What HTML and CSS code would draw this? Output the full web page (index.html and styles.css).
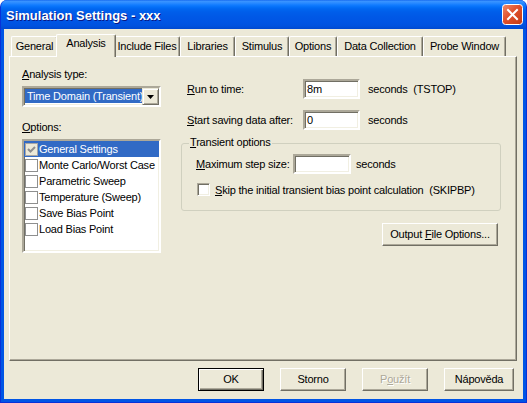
FILE: index.html
```html
<!DOCTYPE html>
<html>
<head>
<meta charset="utf-8">
<link rel="stylesheet" href="styles.css">
</head>
<body>
<div class="window">
  <div class="titlebar">
    <span class="title">Simulation Settings - xxx</span>
    <div class="close">
      <svg width="21" height="21" viewBox="0 0 21 21">
        <defs>
          <linearGradient id="cg" x1="0" y1="0" x2="1" y2="1">
            <stop offset="0" stop-color="#F08C6C"/>
            <stop offset="0.45" stop-color="#E0502C"/>
            <stop offset="1" stop-color="#C23A14"/>
          </linearGradient>
        </defs>
        <rect x="0.5" y="0.5" width="20" height="20" rx="3" fill="url(#cg)" stroke="#fff"/>
        <path d="M6 6 L15 15 M15 6 L6 15" stroke="#fff" stroke-width="2" stroke-linecap="square"/>
      </svg>
    </div>
  </div>
  <div class="client">
    <div class="tabs">
      <div class="tab t-general">General</div>
      <div class="tab active t-analysis">Analysis</div>
      <div class="tab t-include">Include Files</div>
      <div class="tab t-libraries">Libraries</div>
      <div class="tab t-stimulus">Stimulus</div>
      <div class="tab t-options">Options</div>
      <div class="tab t-data">Data Collection</div>
      <div class="tab t-probe">Probe Window</div>
    </div>
    <div class="panel">
      <div class="left">
        <div class="label"><u>A</u>nalysis type:</div>
        <div class="combo sunken">
          <span class="combo-text">Time Domain (Transient)</span>
          <span class="combo-btn">
            <svg width="7" height="4" viewBox="0 0 7 4"><path d="M0 0H7L3.5 4Z" fill="#000"/></svg>
          </span>
        </div>
        <div class="label label-options"><u>O</u>ptions:</div>
        <div class="listbox sunken">
          <div class="item selected"><span class="lcb checked"><svg width="11" height="11" viewBox="0 0 11 11"><path d="M2 5 L4.5 7.5 L9 3" stroke="#8E8E8E" stroke-width="2" fill="none"/></svg></span>General Settings</div>
          <div class="item"><span class="lcb"></span>Monte Carlo/Worst Case</div>
          <div class="item"><span class="lcb"></span>Parametric Sweep</div>
          <div class="item"><span class="lcb"></span>Temperature (Sweep)</div>
          <div class="item"><span class="lcb"></span>Save Bias Point</div>
          <div class="item"><span class="lcb"></span>Load Bias Point</div>
        </div>
      </div>
      <div class="right">
        <div class="row row-first">
          <span class="rlabel"><u>R</u>un to time:</span>
          <span class="textbox sunken">8m</span>
          <span class="suffix">seconds&nbsp; (TSTOP)</span>
        </div>
        <div class="row row-second">
          <span class="rlabel"><u>S</u>tart saving data after:</span>
          <span class="textbox sunken">0</span>
          <span class="suffix">seconds</span>
        </div>
        <div class="group">
          <div class="group-title"><u>T</u>ransient options</div>
          <div class="grow">
            <span class="glabel"><u>M</u>aximum step size:</span>
            <span class="textbox sunken gtext"></span>
            <span class="gsuffix">seconds</span>
          </div>
          <div class="crow">
            <span class="checkbox"></span>
            <span class="ctext"><u>S</u>kip the initial transient bias point calculation&nbsp; (SKIPBP)</span>
          </div>
        </div>
        <div class="outrow">
          <div class="btn btn-output">Output <u>F</u>ile Options...</div>
        </div>
      </div>
    </div>
    <div class="buttons">
      <div class="btn default">OK</div>
      <div class="btn">Storno</div>
      <div class="btn disabled">P<u>o</u>užít</div>
      <div class="btn wide">Nápověda</div>
    </div>
  </div>
</div>
</body>
</html>
```
FILE: styles.css
```css
* { box-sizing: border-box; }
body {
  margin: 0;
  font-family: "Liberation Sans", Arial, sans-serif;
  font-size: 11px;
  letter-spacing: -0.2px;
  color: #000;
  background: #fff;
}
u { text-decoration: underline; text-underline-offset: 1px; }

.window {
  width: 527px;
  height: 403px;
  display: flex;
  flex-direction: column;
  background: #0055E5;
  border-radius: 7px 7px 0 0;
  overflow: hidden;
  border: 1px solid #0831D9;
  border-top: none;
}

.titlebar {
  height: 29px;
  flex: 0 0 29px;
  display: flex;
  align-items: center;
  padding: 0 4px 0 6px;
  background: linear-gradient(to bottom,
    #0A5EEA 0px, #3D95FF 1px, #2A8BFF 3px, #117CFF 5px, #0470F8 7px,
    #0066F0 9px, #005EEA 12px, #0058E6 17px, #0055E4 22px, #0052DE 26px, #0049D0 29px);
  margin: 0 -1px;
}
.title {
  color: #fff;
  font-weight: bold;
  font-size: 13px;
  letter-spacing: 0;
  text-shadow: 1px 1px 0 #0A1883;
  padding-top: 1px;
}
.close {
  margin-left: auto;
  width: 21px;
  height: 21px;
  display: flex;
}

.client {
  flex: 1;
  margin: 0 3px 3px 3px;
  background: #ECE9D8;
  padding: 5px 6px 7px 5px;
  display: flex;
  flex-direction: column;
}

/* tabs */
.tabs {
  height: 22px;
  flex: 0 0 22px;
  display: flex;
  align-items: flex-end;
  padding-left: 2px;
}
.tab {
  height: 20px;
  line-height: 18px;
  text-align: center;
  background: #ECE9D8;
  border-top: 1px solid #fff;
  border-left: 1px solid #fff;
  border-right: 1px solid #716F64;
  box-shadow: inset -1px 0 #ACA899;
  border-radius: 2px 2px 0 0;
  white-space: nowrap;
}
.tab.active {
  height: 23px;
  line-height: 17px;
  margin: 0 -2px -1px -2px;
  position: relative;
  z-index: 1;
}
.t-general { width: 47px; }
.t-analysis { width: 60px; }
.t-include { width: 66px; }
.t-libraries { width: 55px; }
.t-stimulus { width: 54px; }
.t-options { width: 48px; }
.t-data { width: 86px; }
.t-probe { width: 83px; }

/* panel */
.panel {
  flex: 0 0 305px;
  border: 1px solid;
  border-color: #fff #716F64 #716F64 #fff;
  box-shadow: inset -1px -1px #ACA899;
  padding: 11px 15px 0 12px;
  display: grid;
  grid-template-columns: 139px 320px;
  column-gap: 20px;
  align-items: start;
}

.sunken {
  border: 2px solid;
  border-color: #ACA899 #fff #fff #ACA899;
  box-shadow: inset 1px 1px #716F64, inset -1px -1px #F1EFE2;
  background: #fff;
}

.left { display: flex; flex-direction: column; }
.label { line-height: 13px; height: 13px; }
.combo {
  margin-top: 5px;
  height: 21px;
  display: flex;
  padding: 1px;
}
.combo-text {
  flex: 1;
  background: #316AC5;
  color: #fff;
  line-height: 15px;
  padding-left: 2px;
  margin: 0 0 1px 0;
  white-space: nowrap;
  overflow: hidden;
}
.combo-btn {
  width: 17px;
  height: 17px;
  margin: -1px -1px 0 0;
  background: #ECE9D8;
  border: 1px solid;
  border-color: #ECE9D8 #716F64 #716F64 #ECE9D8;
  box-shadow: inset 1px 1px #fff, inset -1px -1px #ACA899;
  display: flex;
  align-items: center;
  justify-content: center;
}
.label-options { margin-top: 14px; }
.listbox {
  margin-top: 5px;
  height: 114px;
  display: flex;
  flex-direction: column;
}
.item {
  height: 16px;
  line-height: 16px;
  display: flex;
  align-items: center;
  padding-left: 1px;
  white-space: nowrap;
}
.item.selected { background: #316AC5; color: #fff; }
.lcb {
  width: 13px;
  height: 13px;
  border: 1px solid #8E8F8F;
  background: #fff;
  margin-right: 1px;
  flex: 0 0 13px;
  display: flex;
}
.lcb.checked { background: #ECE9D8; border-color: #A6A6A6; }

/* right column */
.right { display: flex; flex-direction: column; }
.row {
  display: flex;
  align-items: center;
  height: 20px;
  padding-left: 6px;
}
.row-first { margin-top: 11px; }
.row-second { margin-top: 11px; }
.rlabel { flex: 0 0 116px; white-space: nowrap; }
.textbox {
  width: 57px;
  height: 20px;
  line-height: 16px;
  padding-left: 2px;
}
.suffix { margin-left: 8px; white-space: nowrap; }

.group {
  margin-top: 13px;
  height: 68px;
  border: 1px solid #D0D0BF;
  border-radius: 3px;
  display: flex;
  flex-direction: column;
}
.group-title {
  align-self: flex-start;
  margin: -8px 0 0 7px;
  padding: 0 1px;
  line-height: 13px;
  background: #ECE9D8;
}
.grow {
  display: flex;
  align-items: center;
  margin-top: 5px;
  padding-left: 14px;
  height: 20px;
}
.glabel { flex: 0 0 97px; white-space: nowrap; }
.gtext { width: 58px; }
.gsuffix { margin-left: 5px; }
.crow {
  display: flex;
  align-items: center;
  margin-top: 9px;
  padding-left: 15px;
  height: 13px;
}
.checkbox {
  width: 13px;
  height: 13px;
  flex: 0 0 13px;
  border: 1px solid;
  border-color: #ACA899 #fff #fff #ACA899;
  box-shadow: inset 1px 1px #716F64, inset -1px -1px #F1EFE2;
  background: #fff;
}
.ctext { margin-left: 5px; white-space: nowrap; }

.outrow {
  display: flex;
  justify-content: flex-end;
  margin-top: 12px;
  padding-right: 3px;
}

.btn {
  height: 23px;
  line-height: 21px;
  text-align: center;
  background: #ECE9D8;
  border: 1px solid;
  border-color: #fff #716F64 #716F64 #fff;
  box-shadow: inset -1px -1px #ACA899;
  white-space: nowrap;
}
.btn-output { width: 116px; }
.btn.default {
  border-color: #000;
  box-shadow: inset 1px 1px #fff, inset -1px -1px #716F64, inset -2px -2px #ACA899;
}
.btn.disabled { color: #ACA899; text-shadow: 1px 1px 0 #fff; }

.buttons {
  margin-top: 7px;
  display: flex;
  justify-content: flex-end;
  gap: 16px;
  padding-right: 3px;
}
.buttons .btn { width: 66px; }
.buttons .btn.wide { width: 70px; }
```
